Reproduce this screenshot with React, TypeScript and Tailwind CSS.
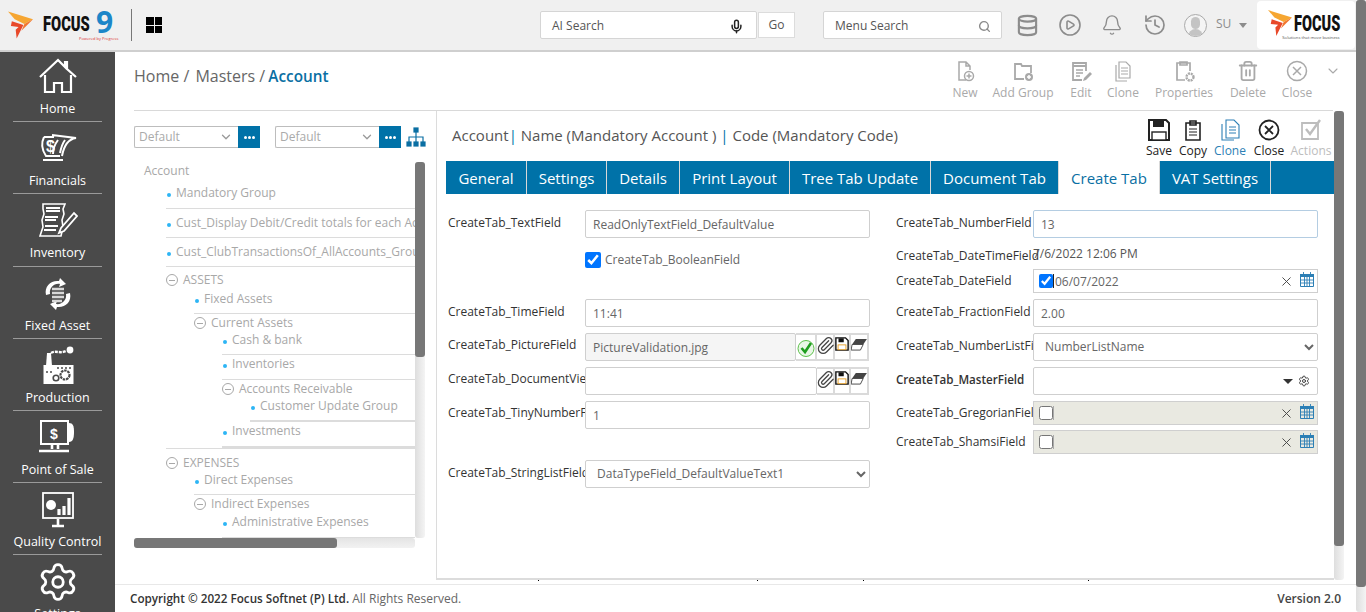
import type { ReactNode } from "react";
import { Bell, ChevronDown, CirclePlay, Database, History, Mic, Paperclip, Search, Settings, Trash2, X } from "lucide-react";

function Flame({ className }: { className: string }) {
  return (
    <svg viewBox="0 0 26 28" className={className}>
      <polygon points="0,0 26,8 17,13 7,8" fill="#f6a632" />
      <polygon points="4,10 16,14 13,20 9,28 8,19 11,16 3,15" fill="#e8492a" />
      <polygon points="17,13 26,8 14,20" fill="#f2762e" />
    </svg>
  );
}

const NavSvg = ({ children }: { children: ReactNode }) => (
  <svg viewBox="0 0 40 40" className="h-10 w-10" fill="none" stroke="#fff" strokeWidth="1.6">
    {children}
  </svg>
);

const NAV: { label: string; icon: ReactNode }[] = [
  {
    label: "Home",
    icon: (
      <NavSvg>
        <path d="M2 20 20 3l7 7V5h2v7l9 8M7 18v17h9V26h8v9h9V18" strokeWidth="2.2" />
      </NavSvg>
    ),
  },
  {
    label: "Financials",
    icon: (
      <NavSvg>
        <path d="M6 8c-3 6-2 13 2 19h14M6 8h10M14 6l24 3c-7 1-12 7-14 18M20 11c-3 4-5 9-5 14M27 11c-3 4-4 8-5 13" strokeWidth="2" />
        <path d="M5 31h20" strokeWidth="2" />
        <text x="8" y="23" fontSize="16" fontWeight="700" fill="#fff" stroke="none" fontFamily="Liberation Sans">$</text>
      </NavSvg>
    ),
  },
  {
    label: "Inventory",
    icon: (
      <NavSvg>
        <path d="M5 3h22l-2 5 1 5-2 6 1 7-2 9H2l3-9-1-7 2-6-1-5z" strokeWidth="1.6" />
        <path d="M8 7h14M8 10h14M7 16h13M7 19h11M7 25h13M6 29h12" strokeWidth="1.8" />
        <path d="m23 27-2 5 5-2 13-15-3-3z" fill="#4a4a4a" strokeWidth="1.8" />
      </NavSvg>
    ),
  },
  {
    label: "Fixed Asset",
    icon: (
      <NavSvg>
        <path d="M8 21C6 12 13 6 21 7l1-3 6 6-7 3 1-3c-6-1-11 4-10 10zM32 19c2 9-5 15-13 14l-1 3-6-6 7-3-1 3c6 1 11-4 10-10z" fill="#fff" stroke="none" />
        <path d="M14 15h12M14 19h12M14 23h12M14 27h10" stroke="#d8d8d8" strokeWidth="2.4" />
      </NavSvg>
    ),
  },
  {
    label: "Production",
    icon: (
      <NavSvg>
        <path d="M8 20 9 7h4l1 13z" fill="#fff" stroke="none" />
        <path d="M13 7c5-3 9 1 15-2" strokeWidth="2.4" strokeDasharray="3 1" />
        <circle cx="32" cy="4" r="3.4" fill="#fff" stroke="none" />
        <rect x="5.5" y="19" width="30" height="19" fill="#fff" stroke="none" />
        <circle cx="27" cy="29" r="4.5" stroke="#4a4a4a" strokeWidth="2.2" strokeDasharray="2.5 0.8" />
        <circle cx="18" cy="32" r="2.8" stroke="#4a4a4a" strokeWidth="1.6" />
        <path d="M8 26h8M19 22h14" stroke="#4a4a4a" strokeWidth="1.4" strokeDasharray="2 2" />
      </NavSvg>
    ),
  },
  {
    label: "Point of Sale",
    icon: (
      <NavSvg>
        <rect x="3" y="3" width="27" height="23" strokeWidth="2" />
        <path d="M31 5c4 0 5 3 5 9s-1 10-5 10z" fill="#fff" stroke="none" />
        <path d="M14 26v5M20 26v5M1 33h30" strokeWidth="2.6" />
        <text x="16" y="21" textAnchor="middle" fontSize="14" fontWeight="700" fill="#fff" stroke="none" fontFamily="Liberation Sans">$</text>
      </NavSvg>
    ),
  },
  {
    label: "Quality Control",
    icon: (
      <NavSvg>
        <rect x="5" y="3" width="30" height="25" strokeWidth="1.8" />
        <circle cx="13" cy="15" r="5" fill="#fff" stroke="none" />
        <path d="M21 25v-6M26 25v-9M31 25V8" strokeWidth="3.2" />
        <path d="M14 36h12M20 29v6" strokeWidth="2.6" />
      </NavSvg>
    ),
  },
  { label: "Settings", icon: <Settings size={42} strokeWidth={1.6} color="#fff" /> },
];

function Sidebar() {
  return (
    <nav className="h-[560px] w-[115px] shrink-0 overflow-hidden bg-[#4a4a4a] text-white">
      <div className="-mt-[2px]">
        {NAV.map((item) => (
          <div key={item.label} className="mx-[13px] flex h-[72.2px] flex-col items-center border-b border-[#9a9a9a] pt-[6px] last:border-b-0">
            <div className="flex h-[42px] items-center justify-center">{item.icon}</div>
            <span className="mt-[2px] whitespace-nowrap text-[12.5px] leading-[18px]">{item.label}</span>
          </div>
        ))}
      </div>
    </nav>
  );
}

function TopBar() {
  return (
    <header className="flex h-[52px] shrink-0 items-center border-b-2 border-[#cfcfcf] bg-[#f0f0f0]">
      <Flame className="ml-[8px] h-[28px] w-[25px]" />
      <div className="relative ml-[10px] flex h-[30px] w-[72px] items-center">
        <span className="origin-left scale-x-[0.7] font-['Roboto'] text-[21px] font-black text-[#111]">FOCUS</span>
        <span className="absolute left-[53px] top-[-6px] font-['Open_Sans'] text-[30px] font-bold leading-[36px] text-[#1c86c8]">9</span>
        <span className="absolute left-[36px] top-[26px] whitespace-nowrap text-[4px] text-[#d33]">Powered by Progress</span>
      </div>
      <div className="ml-[16px] h-[32px] w-px bg-[#777]" />
      <div className="ml-[14px] grid h-[16px] w-[16px] grid-cols-2 gap-[1px]">
        <i className="bg-black" />
        <i className="bg-black" />
        <i className="bg-black" />
        <i className="bg-black" />
      </div>
      <div className="ml-[378px] flex h-[28px] w-[217px] items-center justify-between rounded-[2px] border border-[#d5d5d5] bg-white pl-[11px] pr-[12px] pt-[2px] text-[12px] text-[#555]">
        AI Search
        <Mic size={15} strokeWidth={2.4} color="#222" />
      </div>
      <div className="ml-[1px] flex h-[26px] w-[37px] items-center justify-center border border-[#dcdcdc] bg-white text-[12px] text-[#555]">Go</div>
      <div className="ml-[28px] flex h-[28px] w-[179px] items-center justify-between rounded-[2px] border border-[#d5d5d5] bg-white pl-[11px] pr-[10px] pt-[2px] text-[12px] text-[#555]">
        Menu Search
        <Search size={13} strokeWidth={2.6} color="#8a8a8a" />
      </div>
      <Database size={23} strokeWidth={2.2} color="#8c8c8c" className="ml-[14px]" />
      <CirclePlay size={24} strokeWidth={1.6} color="#8c8c8c" fill="none" className="ml-[19px]" />
      <Bell size={22} strokeWidth={1.5} color="#8c8c8c" className="ml-[19px]" />
      <History size={24} strokeWidth={1.7} color="#8c8c8c" className="ml-[20px]" />
      <div className="relative ml-[17px] h-[23px] w-[23px] overflow-hidden rounded-full border border-[#aaa] bg-[#f4f4f4]">
        <div className="mx-auto mt-[2px] h-[12px] w-[9px] rounded-full bg-[#c4c4c4]" />
        <div className="mx-auto h-[8px] w-[15px] rounded-t-full bg-[#c4c4c4]" />
      </div>
      <span className="ml-[9px] mb-[3px] text-[12px] text-[#8c8c8c]">SU</span>
      <div className="ml-[8px] h-0 w-0 border-x-[4px] border-t-[5px] border-x-transparent border-t-[#8c8c8c]" />
      <div className="ml-[10px] flex h-[48px] w-[98px] items-center rounded-[4px] bg-white pl-[11px]">
        <Flame className="mb-[4px] h-[26px] w-[24px]" />
        <div className="relative ml-[2px] h-[34px] w-[50px]">
          <span className="absolute left-0 top-[3px] origin-left scale-x-[0.66] font-['Roboto'] text-[22px] font-black leading-[26px] text-[#111]">FOCUS</span>
          <span className="absolute left-[-12px] top-[27px] whitespace-nowrap text-[4.2px] leading-[6px] text-[#555]">Solutions that move business</span>
        </div>
      </div>
    </header>
  );
}

const ToolSvg = ({ children }: { children: ReactNode }) => (
  <svg viewBox="0 0 24 24" className="h-[24px] w-[24px]" fill="none" stroke="currentColor" strokeWidth="1.5">
    {children}
  </svg>
);

const TOOLS: { label: string; w: string; icon: ReactNode }[] = [
  { label: "New", w: "w-[52px]", icon: <ToolSvg><path d="M13 21H6V3h7l4 4v4M13 3v4h4" /><circle cx="16" cy="17" r="4.5" /><path d="M16 14.5v5M13.5 17h5" /></ToolSvg> },
  { label: "Add Group", w: "w-[64px]", icon: <ToolSvg><path d="M13 20H4V5h6l1 2h9v7" strokeWidth="1.8" /><circle cx="18" cy="18" r="4" fill="currentColor" stroke="none" /><path d="M18 16v4M16 18h4" stroke="#fff" /></ToolSvg> },
  { label: "Edit", w: "w-[52px]", icon: <ToolSvg><path d="M17 12V4H4v17h9M4 7h13" strokeWidth="1.8" /><path d="M7 11h7M7 14h7M7 17h4" /><path d="m14 22 1-3 6-6 2 2-6 6z" fill="currentColor" stroke="none" /></ToolSvg> },
  { label: "Clone", w: "w-[32px]", icon: <ToolSvg><path d="M8 3h7l4 4v12H8zM5 6v16h11M10 9h7M10 12h7M10 15h7" strokeWidth="1.2" /></ToolSvg> },
  { label: "Properties", w: "w-[90px]", icon: <ToolSvg><path d="M13 21H5V4h13v8M8 3h7v3H8z" strokeWidth="1.7" /><circle cx="18" cy="18" r="3.5" strokeWidth="2.4" strokeDasharray="2 0.8" /></ToolSvg> },
  { label: "Delete", w: "w-[38px]", icon: <Trash2 size={22} strokeWidth={2} /> },
  { label: "Close", w: "w-[60px]", icon: <ToolSvg><circle cx="12" cy="12" r="9.5" /><path d="m8 8 8 8M16 8l-8 8" /></ToolSvg> },
];

function Breadcrumb() {
  return (
    <div className="ml-[19px] mr-[23px] flex h-[59px] shrink-0 items-start justify-between border-b border-[#d9d9d9]">
      <div className="mt-[12px] font-['Open_Sans'] text-[16px] text-[#666]">
        Home / <span className="ml-[2px]">Masters /</span> <span className="-ml-px text-[15.3px] font-semibold text-[#0a6fa3]">Account</span>
      </div>
      <div className="mr-[-9px] mt-[7px] flex items-start text-[#a9a9a9]">
        {TOOLS.map((t) => (
          <div key={t.label} className={`${t.w} flex flex-col items-center`}>
            <div className="flex h-[24px] items-center">{t.icon}</div>
            <span className="mt-[1px] whitespace-nowrap text-[12px] leading-[17px]">{t.label}</span>
          </div>
        ))}
        <ChevronDown size={16} strokeWidth={1.6} className="ml-[-2px] mr-[1px] mt-[4px]" />
      </div>
    </div>
  );
}

function DefaultPick() {
  return (
    <div className="flex h-[22px]">
      <div className="flex w-[104px] items-center justify-between rounded-l-[2px] border border-r-0 border-[#bdbdbd] pl-[4px] pr-[5px] text-[12px] text-[#aaa]">
        Default
        <ChevronDown size={14} strokeWidth={2.2} color="#999" />
      </div>
      <div className="flex w-[22px] items-center justify-center gap-[1px] bg-[#0072a8]">
        <i className="h-[3px] w-[3px] rounded-full bg-white" />
        <i className="h-[3px] w-[3px] rounded-full bg-white" />
        <i className="h-[3px] w-[3px] rounded-full bg-white" />
      </div>
    </div>
  );
}

type TreeRow = { text: string; cls: string; node?: boolean };

const TREE: TreeRow[] = [
  { text: "Mandatory Group", cls: "ml-[32px] h-[29px] pt-[4px] border-b" },
  { text: "Cust_Display Debit/Credit totals for each Account", cls: "ml-[32px] h-[29px] pt-[5px] border-b" },
  { text: "Cust_ClubTransactionsOf_AllAccounts_Group", cls: "ml-[32px] h-[29px] pt-[5px] border-b" },
  { text: "ASSETS", cls: "ml-[32px] h-[20px] pt-[4px]", node: true },
  { text: "Fixed Assets", cls: "ml-[60px] h-[27px] pt-[3px] border-b" },
  { text: "Current Assets", cls: "ml-[60px] h-[17px]", node: true },
  { text: "Cash & bank", cls: "ml-[88px] h-[24px] border-b" },
  { text: "Inventories", cls: "ml-[88px] h-[25px] border-b" },
  { text: "Accounts Receivable", cls: "ml-[88px] h-[17px]", node: true },
  { text: "Customer Update Group", cls: "ml-[116px] h-[25px] border-b-2" },
  { text: "Investments", cls: "ml-[88px] h-[26px] border-b-2" },
  { text: "EXPENSES", cls: "ml-[32px] h-[22px] border-t pt-[5px]", node: true },
  { text: "Direct Expenses", cls: "ml-[60px] h-[25px] pt-px border-b" },
  { text: "Indirect Expenses", cls: "ml-[60px] h-[18px]", node: true },
  { text: "Administrative Expenses", cls: "ml-[88px] h-[25px] border-b" },
];

function TreePanel() {
  return (
    <div className="h-[469px] w-[302px] shrink-0">
      <div className="flex items-center pt-[15px]">
        <DefaultPick />
        <div className="w-[15px]" />
        <DefaultPick />
        <svg viewBox="0 0 20 20" className="ml-[5px] h-[20px] w-[20px]" fill="none" stroke="#0a6fa3" strokeWidth="1.2">
          <path d="M10 3v7M3 16v-6h14v6M10 10v6" />
          <rect x="8" y="1" width="4" height="4" fill="#0a6fa3" />
          <rect x="1" y="15" width="4" height="4" fill="#0a6fa3" />
          <rect x="8" y="15" width="4" height="4" fill="#0a6fa3" />
          <rect x="15" y="15" width="4" height="4" fill="#0a6fa3" />
        </svg>
      </div>
      <div className="mt-[14px] flex">
        <div className="h-[376px] w-[281px] overflow-hidden text-[12px] text-[#a8a8a8]">
          <div className="pl-[10px] leading-[18px]">Account</div>
          {TREE.map((r) => (
            <div key={r.text} className={`${r.cls} border-[#dcdcdc]`}>
              <div className="flex h-[18px] items-center whitespace-nowrap">
                {r.node ? (
                  <span className="mr-[5px] flex h-[12px] w-[12px] shrink-0 items-center justify-center rounded-full border border-[#a8a8a8]">
                    <i className="h-px w-[6px] bg-[#a8a8a8]" />
                  </span>
                ) : (
                  <i className="ml-[1px] mr-[5px] mt-[3px] h-[4px] w-[4px] shrink-0 rounded-full bg-[#2db5f5]" />
                )}
                {r.text}
              </div>
            </div>
          ))}
        </div>
        <VBar track="h-[376px]" thumb="h-[195px]" />
      </div>
      <div className="h-[10px] w-[281px] rounded-[3px] bg-gradient-to-b from-[#e4e4e4] to-[#f2f2f2]">
        <div className="h-[10px] w-[203px] rounded-[3px] bg-[#777]" />
      </div>
    </div>
  );
}

function VBar({ track, thumb }: { track: string; thumb: string }) {
  return (
    <div className={`${track} w-[10px] shrink-0 rounded-[3px] bg-gradient-to-r from-[#dedede] to-[#f4f4f4]`}>
      <div className={`${thumb} rounded-[3px] bg-[#777]`} />
    </div>
  );
}

function Label({ text, cls = "overflow-hidden text-[12px] leading-[26px]" }: { text: string; cls?: string }) {
  return <div className={`${cls} w-[137px] shrink-0 whitespace-nowrap text-[#333]`}>{text}</div>;
}

const boxCls = "h-[28px] rounded-[2px] border text-[12px] leading-[27px] text-[#666]";

function TextRow({ label, value, mt, border = "border-[#cfcfcf]", labelCls }: { label: string; value: string; mt: string; border?: string; labelCls?: string }) {
  return (
    <div className={`${mt} flex`}>
      <Label text={label} cls={labelCls} />
      <div className={`${boxCls} ${border} w-[285px] bg-white pl-[7px]`}>{value}</div>
    </div>
  );
}

function SelectRow({ label, value, mt }: { label: string; value: string; mt: string }) {
  return (
    <div className={`${mt} flex`}>
      <Label text={label} />
      <select defaultValue={value} className={`${boxCls} w-[285px] border-[#cfcfcf] bg-white pb-[2px] pl-[7px]`}>
        <option>{value}</option>
      </select>
    </div>
  );
}

function Floppy() {
  return (
    <svg viewBox="0 0 16 16" className="h-[16px] w-[15px]">
      <path d="M1 1h11l3 3v11H1z" fill="#fff" stroke="#111" strokeWidth="1.6" />
      <rect x="4" y="1.5" width="6" height="4.5" fill="#111" />
      <rect x="3.5" y="9" width="9" height="5.5" fill="#fff" stroke="#e59a1c" />
    </svg>
  );
}

function Eraser() {
  return (
    <svg viewBox="0 0 18 14" className="mt-[2px] h-[13px] w-[17px] shrink-0">
      <polygon points="5,1 17,1 13,7 1,7" fill="#444" />
      <polygon points="1,7 13,7 10,13 0,13" fill="#fff" stroke="#444" />
    </svg>
  );
}

function Cell({ w, children }: { w: string; children: ReactNode }) {
  return <div className={`${w} flex h-[28px] shrink-0 items-start justify-center border-2 border-l-0 border-[#dadada] pt-[1px]`}>{children}</div>;
}

const tightLabel = "overflow-hidden text-[12px] leading-[24px]";

function FileRow({ label, value, mt, ok }: { label: string; value?: string; mt: string; ok?: boolean }) {
  return (
    <div className={`${mt} flex`}>
      <Label text={label} cls={tightLabel} />
      <div className={`${boxCls} ${ok ? "w-[211px] bg-[#f5f5f5]" : "w-[232px] bg-white"} shrink-0 border-[#cfcfcf] pl-[7px]`}>{value}</div>
      {ok && (
        <Cell w="w-[21px]">
          <svg viewBox="0 0 18 18" className="mt-[3px] h-[18px] w-[18px] shrink-0">
            <circle cx="9" cy="9.5" r="8" fill="#e9f7e6" stroke="#5cc04a" />
            <path d="m4.5 9 3.5 4 6-9" fill="none" stroke="#1f9e1f" strokeWidth="2.6" />
          </svg>
        </Cell>
      )}
      <Cell w="w-[18px]">
        <Paperclip size={19} strokeWidth={1.6} color="#444" className="shrink-0" />
      </Cell>
      <Cell w="w-[16px]">
        <Floppy />
      </Cell>
      <Cell w="w-[18px]">
        <Eraser />
      </Cell>
    </div>
  );
}

function Calendar() {
  return (
    <svg viewBox="0 0 14 15" className="mb-[3px] h-[15px] w-[14px]" fill="none" stroke="#2c7fb5">
      <path d="M.5 2.5h13v12H.5z" />
      <rect x="0" y="2" width="14" height="3" fill="#2c7fb5" stroke="none" />
      <path d="M3.5 0v3M10.5 0v3M.5 8h13M.5 11h13M4.5 5v9M7 5v9M9.5 5v9" strokeWidth="0.9" />
    </svg>
  );
}

function DateRow({ label, value, mt }: { label: string; value?: string; mt: string }) {
  const on = value !== undefined;
  return (
    <div className={`${mt} flex`}>
      <Label text={label} cls={tightLabel} />
      <div className={`${on ? "bg-white" : "bg-[#e9e9e1]"} flex h-[24px] w-[285px] items-center border border-[#cfcfcf] pl-[5px] pr-[3px] text-[12px] text-[#666]`}>
        <input type="checkbox" readOnly checked={on} className="m-0 h-[14px] w-[14px]" />
        <i className={`${on ? "bg-[#222]" : "bg-[#aaa]"} h-[14px] w-px`} />
        <span className="ml-px mt-[1px] flex-1">{value}</span>
        <X size={15} strokeWidth={1.5} color="#444" className="mr-[6px]" />
        <Calendar />
      </div>
    </div>
  );
}

const TABS = [
  { label: "General", w: "w-[81px]" },
  { label: "Settings", w: "w-[80px]" },
  { label: "Details", w: "w-[73px]" },
  { label: "Print Layout", w: "w-[110px]" },
  { label: "Tree Tab Update", w: "w-[141px]" },
  { label: "Document Tab", w: "w-[128px]" },
  { label: "Create Tab", w: "w-[101px]", active: true },
  { label: "VAT Settings", w: "w-[111px]" },
];

const HeadSvg = ({ children }: { children: ReactNode }) => (
  <svg viewBox="0 0 22 22" className="h-[22px] w-[22px]" fill="none" stroke="currentColor" strokeWidth="1.6">
    {children}
  </svg>
);

const ACTIONS: { label: string; cls: string; icon: ReactNode }[] = [
  { label: "Save", cls: "w-[36px] text-[#222]", icon: <HeadSvg><path d="M1 1h17l3 3v17H1z" fill="#fff" strokeWidth="2" /><rect x="5" y="1" width="11" height="7" fill="currentColor" stroke="none" /><rect x="4" y="13" width="14" height="8" fill="#fff" strokeWidth="1.4" /></HeadSvg> },
  { label: "Copy", cls: "w-[32px] text-[#222]", icon: <HeadSvg><path d="M4 4h14v17H4zM8 2h6v4H8z" /><path d="M7 10h8M7 13h8M7 16h8" strokeWidth="1.2" /></HeadSvg> },
  { label: "Clone", cls: "w-[42px] text-[#2c7fb5]", icon: <HeadSvg><path d="M7 1h8l5 5v13H7zM3 5v16h12" strokeWidth="1.1" /><path d="M10 8h7M10 11h7M10 14h7" strokeWidth="1" /></HeadSvg> },
  { label: "Close", cls: "w-[36px] text-[#222]", icon: <HeadSvg><circle cx="11" cy="11" r="9.5" strokeWidth="1.8" /><path d="m7 7 8 8M15 7l-8 8" strokeWidth="1.8" /></HeadSvg> },
  { label: "Actions", cls: "w-[48px] text-[#bdbdbd]", icon: <HeadSvg><path d="M2 4h16v16H2z" strokeWidth="1.8" /><path d="m6 10 4 5 10-14" strokeWidth="2.4" /></HeadSvg> },
];

function FormPanel() {
  return (
    <div className="relative h-[469px] w-[898px] shrink-0 border-b-2 border-l border-[#dcdcdc]">
      <div className="ml-[15px] flex h-[50px] items-start justify-between">
        <div className="mt-[13px] whitespace-nowrap text-[15px] leading-[22px] text-[#555]">
          Account<span className="text-[#0072a8]">|</span> Name (Mandatory Account ) <span className="text-[#0072a8]">|</span> Code (Mandatory Code)
        </div>
        <div className="mr-[-1px] mt-[8px] flex">
          {ACTIONS.map((a) => (
            <div key={a.label} className={`${a.cls} flex flex-col items-center`}>
              {a.icon}
              <span className="whitespace-nowrap text-[12px] leading-[20px]">{a.label}</span>
            </div>
          ))}
        </div>
      </div>
      <div className="ml-[9px] flex h-[33px] bg-[#0072a8]">
        {TABS.map((t) => (
          <div key={t.label} className={`${t.w} ${t.active ? "bg-white text-[#0a6fa3]" : "text-white"} flex items-center justify-center whitespace-nowrap border-r border-[#d8d8d8] pt-[2px] text-[15px]`}>
            {t.label}
          </div>
        ))}
      </div>
      <div className="flex pl-[11px]">
        <div className="w-[422px]">
          <TextRow label="CreateTab_TextField" value="ReadOnlyTextField_DefaultValue" mt="mt-[16px]" />
          <label className="ml-[137px] mt-[14px] flex h-[16px] items-center text-[12px] text-[#666]">
            <input type="checkbox" readOnly checked className="m-0 h-[16px] w-[16px]" />
            <span className="ml-[4px]">CreateTab_BooleanField</span>
          </label>
          <TextRow label="CreateTab_TimeField" value="11:41" mt="mt-[31px]" />
          <FileRow label="CreateTab_PictureField" value="PictureValidation.jpg" mt="mt-[6px]" ok />
          <FileRow label="CreateTab_DocumentViewer" mt="mt-[6px]" />
          <TextRow label="CreateTab_TinyNumberField" value="1" mt="mt-[6px]" labelCls={tightLabel} />
          <SelectRow label="CreateTab_StringListField" value="DataTypeField_DefaultValueText1" mt="mt-[31px]" />
        </div>
        <div className="ml-[26px] w-[422px]">
          <TextRow label="CreateTab_NumberField" value="13" mt="mt-[16px]" border="border-[#b4cde2]" />
          <div className="mt-[7px] flex h-[16px] items-start text-[12px] text-[#555]">
            <Label text="CreateTab_DateTimeField" cls="mt-[3px] text-[12px] leading-[16px]" />
            7/6/2022 12:06 PM
          </div>
          <DateRow label="CreateTab_DateField" value="06/07/2022" mt="mt-[8px]" />
          <TextRow label="CreateTab_FractionField" value="2.00" mt="mt-[6px]" />
          <SelectRow label="CreateTab_NumberListField" value="NumberListName" mt="mt-[6px]" />
          <div className="mt-[6px] flex">
            <Label text="CreateTab_MasterField" cls="overflow-hidden text-[11.6px] font-semibold leading-[26px]" />
            <div className={`${boxCls} flex w-[285px] items-center justify-end border-[#cfcfcf] bg-white pr-[7px]`}>
              <i className="h-0 w-0 border-x-[5px] border-t-[5px] border-x-transparent border-t-[#333]" />
              <Settings size={12} strokeWidth={2} color="#444" className="ml-[5px]" />
            </div>
          </div>
          <DateRow label="CreateTab_GregorianField" mt="mt-[6px]" />
          <DateRow label="CreateTab_ShamsiField" mt="mt-[5px]" />
        </div>
      </div>
      <i className="absolute bottom-[-3px] left-[101px] h-px w-px bg-black" />
      <i className="absolute bottom-[-3px] left-[320px] h-px w-px bg-black" />
      <i className="absolute bottom-[-3px] left-[426px] h-px w-px bg-black" />
      <i className="absolute bottom-[-3px] left-[651px] h-px w-px bg-black" />
    </div>
  );
}

export default function App() {
  return (
    <div className="flex h-[612px] w-[1366px] overflow-hidden bg-white font-['Open_Sans',sans-serif]">
      <div className="flex w-[1356px] shrink-0 flex-col">
        <TopBar />
        <div className="flex min-h-0 flex-1">
          <Sidebar />
          <div className="flex min-w-0 flex-1 flex-col">
            <Breadcrumb />
            <div className="flex h-[473px] shrink-0 pl-[19px]">
              <TreePanel />
              <FormPanel />
              <VBar track="h-[469px]" thumb="h-[435px]" />
            </div>
            <footer className="flex h-[28px] shrink-0 items-center justify-between border-t border-[#e8e8e8] pl-[15px] pr-[15px] text-[12px] text-[#666]">
              <span>
                <span className="text-[11.7px] font-semibold text-[#333]">Copyright © 2022 Focus Softnet (P) Ltd.</span> All Rights Reserved.
              </span>
              <span className="font-semibold text-[#444]">Version 2.0</span>
            </footer>
          </div>
        </div>
      </div>
      <VBar track="h-[612px]" thumb="h-[587px]" />
    </div>
  );
}
